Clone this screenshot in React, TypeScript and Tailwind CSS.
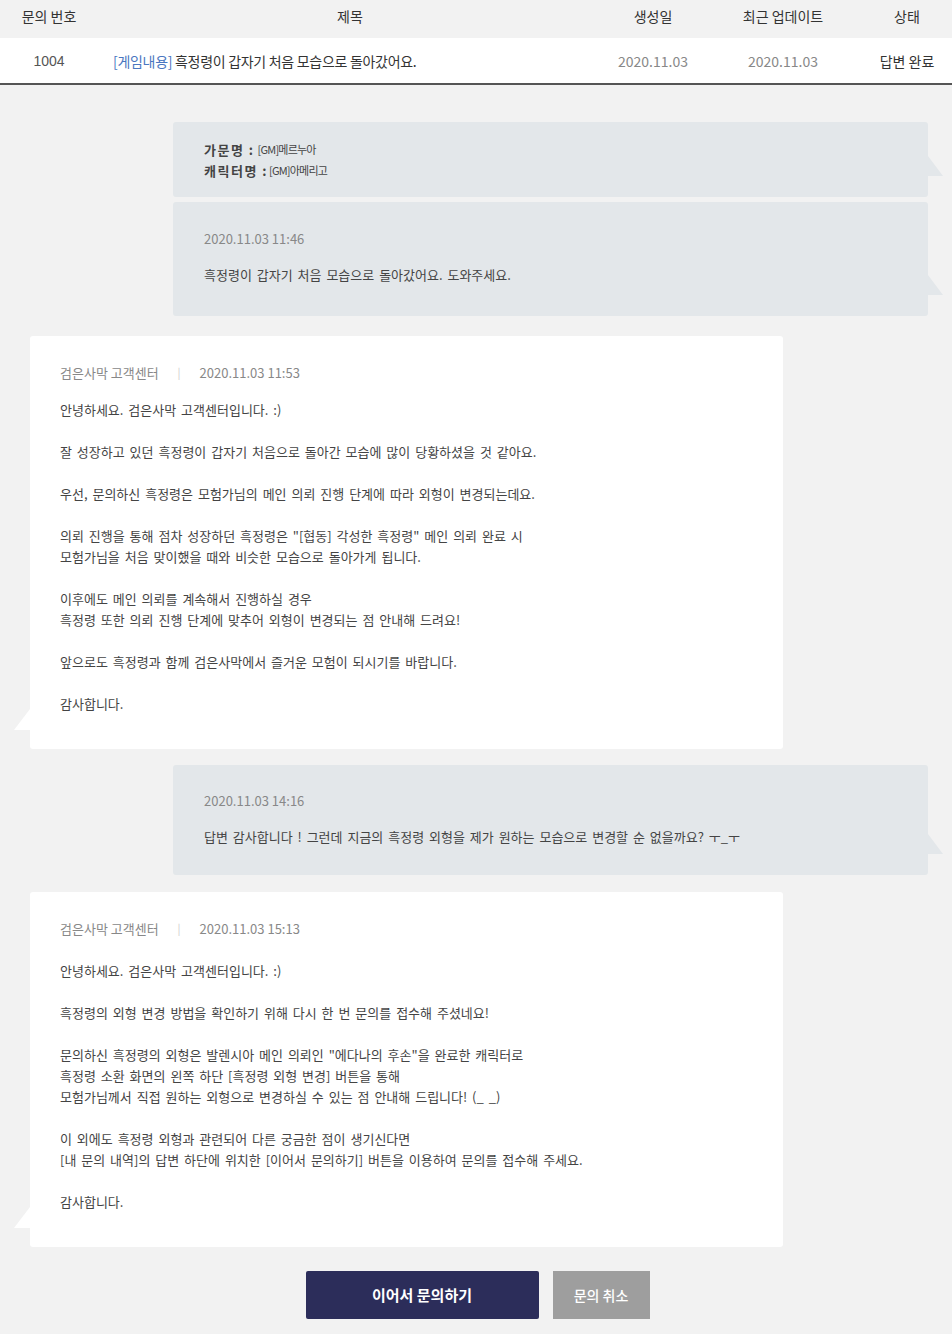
const FONT = "font-['Noto_Sans_CJK_KR','Noto_Sans',sans-serif]";

type Para = string[];

const answer1: Para[] = [
  ["안녕하세요. 검은사막 고객센터입니다. :)"],
  ["잘 성장하고 있던 흑정령이 갑자기 처음으로 돌아간 모습에 많이 당황하셨을 것 같아요."],
  ["우선, 문의하신 흑정령은 모험가님의 메인 의뢰 진행 단계에 따라 외형이 변경되는데요."],
  [
    "의뢰 진행을 통해 점차 성장하던 흑정령은 \"[협동] 각성한 흑정령\" 메인 의뢰 완료 시",
    "모험가님을 처음 맞이했을 때와 비슷한 모습으로 돌아가게 됩니다.",
  ],
  [
    "이후에도 메인 의뢰를 계속해서 진행하실 경우",
    "흑정령 또한 의뢰 진행 단계에 맞추어 외형이 변경되는 점 안내해 드려요!",
  ],
  ["앞으로도 흑정령과 함께 검은사막에서 즐거운 모험이 되시기를 바랍니다."],
  ["감사합니다."],
];

const answer2: Para[] = [
  ["안녕하세요. 검은사막 고객센터입니다. :)"],
  ["흑정령의 외형 변경 방법을 확인하기 위해 다시 한 번 문의를 접수해 주셨네요!"],
  [
    "문의하신 흑정령의 외형은 발렌시아 메인 의뢰인 \"에다나의 후손\"을 완료한 캐릭터로",
    "흑정령 소환 화면의 왼쪽 하단 [흑정령 외형 변경] 버튼을 통해",
    "모험가님께서 직접 원하는 외형으로 변경하실 수 있는 점 안내해 드립니다! (_ _)",
  ],
  [
    "이 외에도 흑정령 외형과 관련되어 다른 궁금한 점이 생기신다면",
    "[내 문의 내역]의 답변 하단에 위치한 [이어서 문의하기] 버튼을 이용하여 문의를 접수해 주세요.",
  ],
  ["감사합니다."],
];

function RightTail() {
  return (
    <svg className="absolute -right-[15px] bottom-[21px]" width="15" height="20" viewBox="0 0 15 20">
      <path d="M0 0 L15 20 L0 20 Z" fill="#e3e7ea" />
    </svg>
  );
}

function LeftTail() {
  return (
    <svg className="absolute -left-[16px] bottom-[19px]" width="16" height="21" viewBox="0 0 16 21">
      <path d="M16 0 L0 21 L16 21 Z" fill="#ffffff" />
    </svg>
  );
}

function UserBubble({ date, text, className }: { date: string; text: string; className: string }) {
  return (
    <div className={`relative ml-[173px] w-[755px] rounded-[3px] bg-[#e3e7ea] pl-[31px] ${className}`}>
      <p className="text-[13px] leading-[21px] text-[#888]">{date}</p>
      <p className="mt-[15px] text-[13px] leading-[21px] text-[#444] [word-spacing:2px]">{text}</p>
      <RightTail />
    </div>
  );
}

function AdminBubble({ date, paras, className }: { date: string; paras: Para[]; className: string }) {
  return (
    <div className={`relative ml-[30px] w-[753px] rounded-[3px] bg-white pl-[30px] pb-[35px] pt-[26px] ${className}`}>
      <div className="flex items-center text-[13px] leading-[21px] text-[#888]">
        <span>검은사막 고객센터</span>
        <span className="mx-[19px] text-[11px] text-[#ccc]">|</span>
        <span>{date}</span>
      </div>
      <div className="mt-[16px] flex flex-col gap-[21px] text-[13px] leading-[21px] text-[#444] [word-spacing:2px]">
        {paras.map((p, i) => (
          <div key={i}>
            {p.map((line, j) => (
              <p key={j}>{line}</p>
            ))}
          </div>
        ))}
      </div>
      <LeftTail />
    </div>
  );
}

export default function App() {
  return (
    <div className={`${FONT} min-h-[1334px] w-[952px] bg-[#f2f2f2] pb-[15px]`}>
      <div className="grid h-[38px] grid-cols-[98px_504px_102px_158px_90px] items-center pb-[5px] text-[14px] text-[#333]">
        <span className="text-center">문의 번호</span>
        <span className="text-center">제목</span>
        <span className="text-center">생성일</span>
        <span className="text-center">최근 업데이트</span>
        <span className="text-center">상태</span>
      </div>
      <div className="grid h-[47px] grid-cols-[98px_504px_102px_158px_90px] items-center border-b-[2px] border-[#555] bg-white pt-[2px] text-[14px]">
        <span className="text-center font-['Liberation_Sans',sans-serif] text-[#555]">1004</span>
        <span className="pl-[15px] tracking-[-0.3px] text-[#333]">
          <span className="text-[#4a76c0]">[게임내용]</span> 흑정령이 갑자기 처음 모습으로 돌아갔어요.
        </span>
        <span className="text-center text-[#888]">2020.11.03</span>
        <span className="text-center text-[#888]">2020.11.03</span>
        <span className="text-center text-[#333]">답변 완료</span>
      </div>

      <div className="relative ml-[173px] mt-[37px] w-[755px] rounded-[3px] bg-[#e3e7ea] pb-[16px] pl-[31px] pt-[17px] text-[#444]">
        <p className="flex items-center leading-[21px]">
          <span className="text-[13px] font-bold tracking-[1.5px]">가문명 :</span>
          <span className="ml-[3px] text-[11px] tracking-[-0.8px]">[GM]메르누아</span>
        </p>
        <p className="flex items-center leading-[21px]">
          <span className="text-[13px] font-bold tracking-[1.5px]">캐릭터명 :</span>
          <span className="ml-[1px] text-[11px] tracking-[-0.8px]">[GM]아메리고</span>
        </p>
        <RightTail />
      </div>

      <UserBubble
        className="mt-[5px] pb-[31px] pt-[26px]"
        date="2020.11.03 11:46"
        text="흑정령이 갑자기 처음 모습으로 돌아갔어요. 도와주세요."
      />

      <AdminBubble className="mt-[20px]" date="2020.11.03 11:53" paras={answer1} />

      <UserBubble
        className="mt-[16px] pb-[28px] pt-[25px]"
        date="2020.11.03 14:16"
        text="답변 감사합니다 ! 그런데 지금의 흑정령 외형을 제가 원하는 모습으로 변경할 순 없을까요? ㅜ_ㅜ"
      />

      <AdminBubble className="mt-[17px] [&>div:nth-child(2)]:mt-[21px]" date="2020.11.03 15:13" paras={answer2} />

      <div className="mt-[24px] flex justify-center gap-[14px] pl-[3px]">
        <button className="h-[48px] w-[233px] rounded-[2px] bg-[#2c2d5a] text-[15px] font-bold text-white">
          이어서 문의하기
        </button>
        <button className="h-[48px] w-[97px] bg-[#9e9e9e] text-[14px] font-medium text-white">문의 취소</button>
      </div>
    </div>
  );
}
